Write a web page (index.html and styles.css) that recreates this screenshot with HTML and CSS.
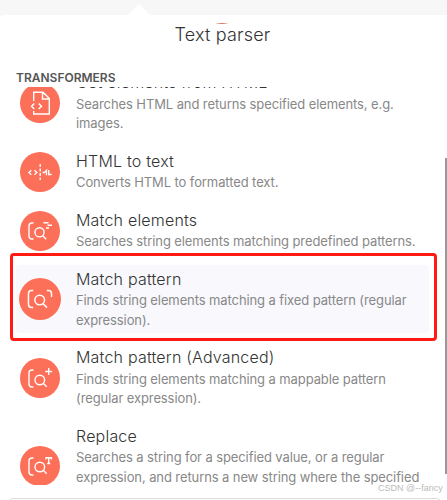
FILE: index.html
```html
<!DOCTYPE html>
<html lang="en">
<head>
  <meta charset="UTF-8" />
  <meta name="viewport" content="width=device-width, initial-scale=1.0" />
  <title>Text parser</title>
  <link rel="stylesheet" href="styles.css">
</head>
<body>
  <div class="arrow"></div>
  <main class="panel">
    <header>
      <span class="app-icon"></span>
      <h1>Text parser</h1>
    </header>
    <h2>TRANSFORMERS</h2>
    <div class="list">
      <div class="item">
        <svg class="icon" viewBox="0 0 40 40">
          <path d="M13.700 18V9.300h9.300l6.300 6.300v15.400H13.700v-3M22.500 9.300v6.700h6.500M14.300 20.500l-2.800 2.800 2.800 2.800M18.700 20.500l2.800 2.800-2.800 2.800" />
        </svg>
        <div class="text">
          <h3>Get elements from HTML</h3>
          <p>Searches HTML and returns specified elements, e.g. images.</p>
        </div>
      </div>
      <div class="item">
        <svg class="icon" viewBox="0 0 40 40">
          <path d="M11.300 18.300l-2.300 2.200 2.300 2.200M14.500 18.300l2.300 2.200-2.300 2.200M22.500 20.500h2.500M24 21l2.500-2.500v4.700M28.700 18v4.500h3" />
          <path class="dashed" d="M20.200 12v16" />
        </svg>
        <div class="text">
          <h3>HTML to text</h3>
          <p>Converts HTML to formatted text.</p>
        </div>
      </div>
      <div class="item">
        <svg class="icon" viewBox="0 0 40 40">
          <path d="M13.500 12H12q-3 0-3 3v10q0 3 3 3h1.500M22.800 24.800l3.400 3.400M23.500 11.700h5M27.500 14.300h4.500M26 17h3" />
          <circle cx="19.500" cy="21.300" r="4.600" />
        </svg>
        <div class="text">
          <h3>Match elements</h3>
          <p>Searches string elements matching predefined patterns.</p>
        </div>
      </div>
      <div class="item selected">
        <svg class="icon" viewBox="0 0 40 40">
          <path d="M13.500 12H12q-3 0-3 3v10q0 3 3 3h1.500M23 24.500l3.700 3.700M26.500 12H28q3 0 3 3v3" />
          <circle cx="19.700" cy="21" r="4.600" />
        </svg>
        <div class="text">
          <h3>Match pattern</h3>
          <p>Finds string elements matching a fixed pattern (regular expression).</p>
        </div>
      </div>
      <div class="item">
        <svg class="icon" viewBox="0 0 40 40">
          <path d="M13.500 12H12q-3 0-3 3v11q0 3 3 3h1.500M23.300 25.300l3.400 3.400M28.700 10v7M25.200 13.500h7" />
          <circle cx="19.800" cy="22" r="4.800" />
        </svg>
        <div class="text">
          <h3>Match pattern (Advanced)</h3>
          <p>Finds string elements matching a mappable pattern (regular expression).</p>
        </div>
      </div>
      <div class="item">
        <svg class="icon" viewBox="0 0 40 40">
          <path d="M13.500 12H12q-3 0-3 3v11q0 3 3 3h1.500M23.300 24.300l3.400 3.400M26 13.500v-1.700h5.400v1.700M28.700 11.700v5.800M27.200 17.500h3" />
          <circle cx="19.800" cy="21" r="4.800" />
        </svg>
        <div class="text">
          <h3>Replace</h3>
          <p>Searches a string for a specified value, or a regular expression, and returns a new string where the specified value is replaced.</p>
        </div>
      </div>
    </div>
    <div class="search"></div>
  </main>
  <div class="highlight"></div>
  <div class="scrollbar"></div>
  <span class="watermark">CSDN @--fancy</span>
</body>
</html>
```

FILE: styles.css
```css
* {
  box-sizing: border-box;
}
body {
  font-family: Inter, sans-serif;
  background-color: #f7f7f7;
  color: #333;
  margin: 0;
  height: 500px;
  position: relative;
  overflow: hidden;
}
h1, h2, h3, p {
  margin: 0;
}
.arrow {
  width: 22px;
  height: 11px;
  margin: 4px 0 0 128px;
  background: white;
  clip-path: polygon(50% 0, 100% 100%, 0 100%);
}
.panel {
  height: 485px;
  background: white;
  border-top-left-radius: 4px;
  overflow: hidden;
}
header {
  position: relative;
  height: 53px;
  padding-top: 8px;
  text-align: center;
}
.app-icon {
  position: absolute;
  top: 8px;
  left: 216px;
  width: 12px;
  height: 1px;
  border-radius: 50%;
  background: #e0705c;
}
h1 {
  font-size: 18px;
  font-weight: 350;
  line-height: 24px;
  letter-spacing: 0.2px;
  padding-right: 2px;
}
h2 {
  height: 19px;
  padding-left: 16px;
  font-size: 12px;
  line-height: 19px;
  font-weight: 600;
  color: #555;
}
.list {
  height: 398px;
  overflow: hidden;
  padding: 0 18px 0 16px;
}
.item {
  display: flex;
  align-items: center;
  gap: 16px;
  margin-bottom: 11px;
  padding: 3.5px 4px 2.5px;
  border-radius: 4px;
}
/* list is scrolled down a little */
.item:first-child {
  margin-top: -18.5px;
}
.selected {
  background: #f8f8fd;
}
.icon {
  flex: none;
  width: 40px;
  height: 40px;
  border-radius: 50%;
  background: #fc6f58;
  fill: none;
  stroke: white;
  stroke-width: 1.4;
}
.selected .icon {
  transform: scale(1.05);
}
.dashed {
  stroke-dasharray: 3 1.5;
}
h3 {
  margin-bottom: 2.5px;
  font-size: 16px;
  font-weight: 350;
  line-height: 20px;
  letter-spacing: 0.2px;
}
.item p {
  font-size: 13px;
  line-height: 19.5px;
  letter-spacing: -0.1px;
  color: #888;
}
.search {
  height: 40px;
  margin: 13px 6px 0 9px;
  border: 1px solid #ddd;
  border-radius: 4px;
}
.highlight {
  position: absolute;
  top: 253px;
  left: 10px;
  width: 427px;
  height: 88px;
  border: 3px solid #ff1a12;
  border-radius: 4px;
}
.scrollbar {
  position: absolute;
  top: 158px;
  right: 0;
  width: 2px;
  height: 316px;
  background: #999;
}
.watermark {
  position: absolute;
  top: 482px;
  left: 378px;
  font-family: "Liberation Sans", sans-serif;
  font-size: 9px;
  line-height: 13px;
  color: #bbb;
}
```
